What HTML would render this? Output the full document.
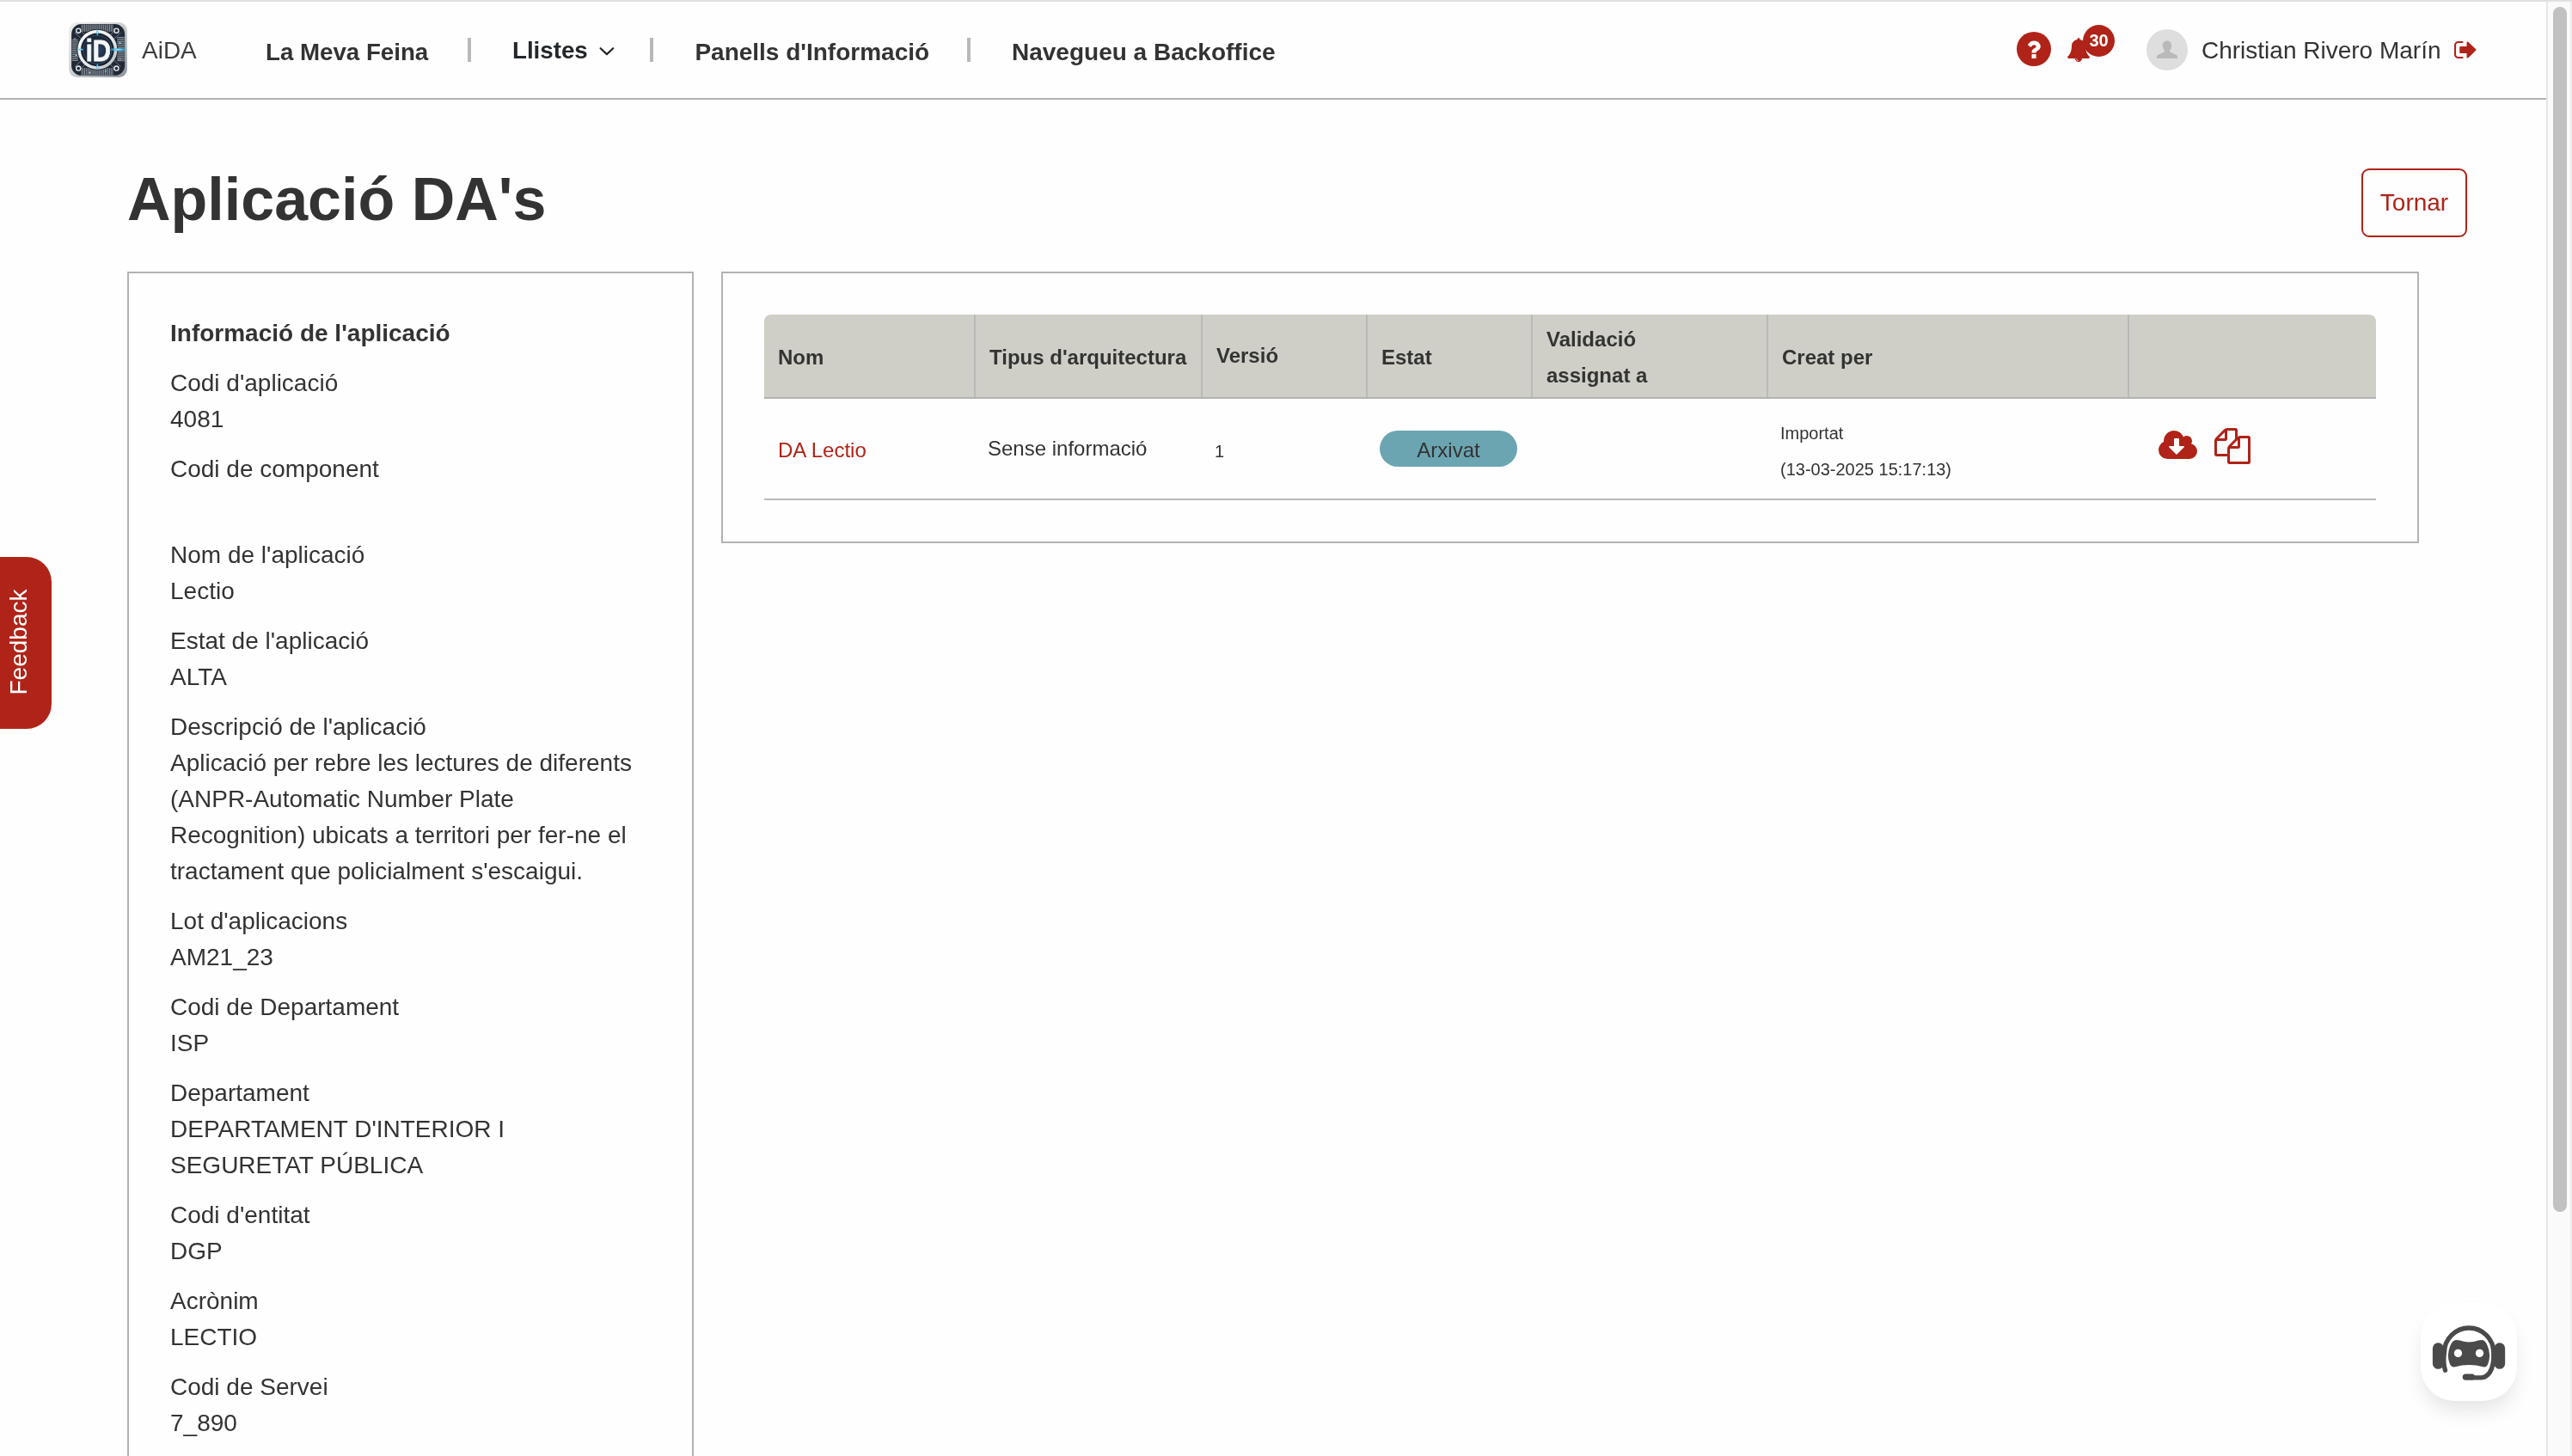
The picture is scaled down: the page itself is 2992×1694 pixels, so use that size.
<!DOCTYPE html>
<html lang="ca">
<head>
<meta charset="utf-8">
<title>AiDA - Aplicació DA's</title>
<style>
*{box-sizing:border-box;margin:0;padding:0}
html,body{width:2992px;height:1694px;overflow:hidden;background:#fefefe}
body{position:relative;font-family:"Liberation Sans",Arial,Helvetica,sans-serif;color:#333;font-size:28px;line-height:42px}
.abs{position:absolute}
a{text-decoration:none;display:block}
button{font-family:inherit;padding:0;margin:0;cursor:pointer;display:block}
.t{position:absolute;white-space:nowrap}
/* top chrome strip */
#strip{left:0;top:0;width:2992px;height:2px;background:#dfe1df}
/* header */
#hdr{left:0;top:2px;width:2962px;height:114px;border-bottom:2px solid #b3b3b3;background:#fefefe}
.nav{font-weight:bold;font-size:28px;line-height:42px;color:#333}
.sep{position:absolute;top:44px;width:4px;height:28px;background:#b9b9b9}
/* scrollbar */
#sbtrack{left:2962px;top:2px;width:30px;height:1692px;background:#fafafa;border-left:2px solid #e6e6e6;border-right:2px solid #ececec}
#sbthumb{left:2970px;top:8px;width:16px;height:1402px;border-radius:8px;background:#c1c1c1}
/* panels */
.panel{position:absolute;border:2px solid #b3b3b3;background:#fefefe}
#left{left:148px;top:316px;width:659px;height:1500px}
#right{left:839px;top:316px;width:1975px;height:316px}
.lbl{position:absolute;left:198px;white-space:nowrap;font-size:28px;line-height:42px;color:#333}
/* table */
#thead{left:889px;top:366px;width:1875px;height:98px;background:#cfcfc7;border-radius:8px 8px 0 0;border-bottom:2px solid #b3b3b3}
.cs{position:absolute;top:366px;width:2px;height:96px;background:#b9b9b9}
.th{position:absolute;font-weight:bold;font-size:24px;line-height:42px;color:#333;white-space:nowrap}
.td{position:absolute;font-size:24px;line-height:42px;color:#333;white-space:nowrap}
#rowline{left:889px;top:580px;width:1875px;height:2px;background:#b9b9b9}
#badge{left:1605px;top:501px;width:160px;height:42px;border-radius:21px;background:#6ba5b2;text-align:center;font-size:24px;line-height:46px;color:#333}
.sm{position:absolute;font-size:20px;line-height:42px;color:#333;white-space:nowrap}
/* button */
#tornar{left:2747px;top:196px;width:123px;height:80px;border:2px solid #b02318;border-radius:9px;color:#b02318;font-size:28px;line-height:76px;text-align:center;background:#fefefe}
/* feedback */
#fb{left:0;top:648px;width:60px;height:200px;background:#b02318;border-radius:0 29px 29px 0}
#fbt{left:-78.500px;top:726px;width:200px;height:42px;line-height:42px;text-align:center;color:#fff;font-size:28px;transform:rotate(-90deg);transform-origin:center center;white-space:nowrap}
/* chatbot */
#bot{left:2816px;top:1516px;width:112px;height:114px;border-radius:40px;background:#fff;box-shadow:0 14px 24px -4px rgba(0,0,0,.11)}
</style>
</head>
<body>
<div id="page" style="position:absolute;left:0;top:0;width:2992px;height:1694px;overflow:hidden;will-change:transform">
<div id="strip" class="abs"></div>
<header id="hdr" class="abs"></header>
<div id="sbtrack" class="abs"></div>
<div id="sbthumb" class="abs"></div>

<!-- HEADER CONTENT -->
<svg class="abs" style="left:80px;top:26px" width="68" height="64" viewBox="262 205 873 825">
<defs>
<linearGradient id="lgm" x1="0" y1="0" x2="1" y2="1"><stop offset="0" stop-color="#f0f0ef"/><stop offset=".45" stop-color="#d2d3d3"/><stop offset="1" stop-color="#8b949b"/></linearGradient>
<linearGradient id="lgr" x1="0" y1="0" x2="1" y2="1"><stop offset="0" stop-color="#ffffff"/><stop offset=".6" stop-color="#e4e6e7"/><stop offset="1" stop-color="#aeb4b9"/></linearGradient>
<radialGradient id="lgc"><stop offset="0" stop-color="#c4f1ff"/><stop offset=".45" stop-color="#43bdf3" stop-opacity=".85"/><stop offset="1" stop-color="#3bb5f0" stop-opacity="0"/></radialGradient>
<radialGradient id="lgi"><stop offset="0" stop-color="#2b4560"/><stop offset="1" stop-color="#16202d"/></radialGradient>
</defs>
<rect x="262" y="205" width="873" height="825" rx="120" fill="url(#lgm)"/>
<rect x="300" y="232" width="800" height="770" rx="150" fill="#1f2937"/>
<g stroke="#d3d6d9" stroke-width="9" opacity=".85">
<path d="M455 236V345M477 236V345M499 236V345M521 236V345M543 236V345M565 236V334M587 236V325M609 236V318M631 236V312M653 236V309M675 236V307M697 236V307M719 236V308M741 236V311M763 236V316M785 236V322M807 236V330M829 236V341M851 236V345M873 236V345M895 236V345M917 236V345"/>
<path d="M455 998V890M477 998V890M499 998V890M521 998V890M543 998V890M565 998V895M587 998V904M609 998V911M631 998V917M653 998V920M675 998V922M697 998V922M719 998V921M741 998V918M763 998V913M785 998V907M807 998V899M829 998V890M851 998V890M873 998V890M895 998V890M917 998V890"/>
<path d="M306 470H400M306 492H400M306 514H399M306 536H392M306 558H387M306 580H384M306 602H382M306 624H382M306 646H383M306 668H386M306 690H391M306 712H398M306 734H400M306 756H400M306 778H400"/>
<path d="M1096 430H985M1096 452H985M1096 474H985M1096 496H985M1096 518H985M1096 540H988M1096 562H993M1096 584H996M1096 606H997M1096 628H997M1096 650H995M1096 672H992M1096 694H987M1096 716H985M1096 738H985M1096 760H985M1096 782H985"/>
<path d="M350 360L470 470M440 330L510 400M1040 360L920 470M950 330L880 400M350 870L470 760M440 905L510 830M1040 870L920 760M950 905L880 830" stroke-width="7"/>
</g>
<g fill="#1f2937" stroke="#eceeef" stroke-width="17"><circle cx="405" cy="330" r="33"/><circle cx="975" cy="330" r="33"/><circle cx="405" cy="895" r="33"/><circle cx="975" cy="895" r="33"/></g>
<g fill="#1f2937" stroke="#d5d8da" stroke-width="7"><circle cx="352" cy="455" r="14"/><circle cx="1022" cy="760" r="16"/></g>
<circle cx="690" cy="615" r="297" fill="url(#lgr)"/>
<circle cx="690" cy="615" r="250" fill="url(#lgi)"/>
<circle cx="690" cy="615" r="214" fill="none" stroke="#5f768c" stroke-width="6"/>
<text x="514" y="788" font-family="Liberation Sans,Arial,sans-serif" font-weight="bold" font-size="460" fill="#f4f5f6" stroke="#f4f5f6" stroke-width="10" textLength="380" lengthAdjust="spacingAndGlyphs">iD</text>
<ellipse cx="690" cy="360" rx="20" ry="56" fill="url(#lgc)"/>
<ellipse cx="690" cy="868" rx="20" ry="56" fill="url(#lgc)"/>
<ellipse cx="440" cy="612" rx="56" ry="20" fill="url(#lgc)"/>
<ellipse cx="1000" cy="614" rx="150" ry="30" fill="url(#lgc)"/>
<circle cx="1028" cy="515" r="15" fill="#6ad3f8"/><circle cx="572" cy="958" r="13" fill="#6ad3f8"/><circle cx="812" cy="935" r="11" fill="#6ad3f8"/><circle cx="372" cy="700" r="10" fill="#bfeeff"/>
</svg>
<div class="t" style="left:165px;top:38px;font-size:28px;color:#3d3d3d">AiDA</div>
<a class="t nav" style="left:309px;top:40px;font-size:27.7px">La Meva Feina</a>
<div class="sep" style="left:544px"></div>
<a class="t nav" style="left:596px;top:38px;color:#24272b;font-size:27.7px">Llistes</a>
<svg class="abs" style="left:696px;top:54px" width="20" height="13" viewBox="0 0 20 13"><path d="M2.600 2.200 L9.900 9.100 L17.200 2.200" fill="none" stroke="#24272b" stroke-width="2.2" stroke-linecap="round" stroke-linejoin="round"/></svg>
<div class="sep" style="left:756px"></div>
<a class="t nav" style="left:808.4px;top:40px">Panells d'Informació</a>
<div class="sep" style="left:1125px"></div>
<a class="t nav" style="left:1177px;top:40px">Navegueu a Backoffice</a>
<svg class="abs" style="left:2346px;top:37px" width="40" height="40" viewBox="128 128 1536 1536"><circle cx="896" cy="896" r="768" fill="#b02318"/><g transform="translate(905 925) scale(0.77) translate(-905 -896)"><path fill="#fff" d="M1024 1376v-192q0-14-9-23t-23-9h-192q-14 0-23 9t-9 23v192q0 14 9 23t23 9h192q14 0 23-9t9-23zm256-672q0-88-55.500-163t-138.500-116-170-41q-243 0-371 213-15 24 8 42l132 100q7 6 19 6 16 0 25-12 53-68 86-92 34-24 86-24 48 0 85.500 26t37.500 59q0 38-20 61t-68 45q-63 28-115.500 86.500t-52.500 125.500v36q0 14 9 23t23 9h192q14 0 23-9t9-23q0-19 21.500-49.500t54.500-49.500q32-18 49-28.500t46-35 44.500-48 28-60.500 12.500-81z"/></g></svg>
<svg class="abs" style="left:2405px;top:44px" width="26" height="28" viewBox="64 0 1664 1792"><path fill="#b02318" d="M912 1696q0-16-16-16-59 0-101.500-42.500t-42.500-101.500q0-16-16-16t-16 16q0 73 51.500 124.500t124.500 51.500q16 0 16-16zm816-288q0 52-38 90t-90 38h-448q0 106-75 181t-181 75-181-75-75-181h-448q-52 0-90-38t-38-90q50-42 91-88t85-119.500 74.500-158.500 50-206 19.500-260q0-152 117-282.500t307-158.500q-8-19-8-39 0-40 28-68t68-28 68 28 28 68q0 20-8 39 190 28 307 158.500t117 282.500q0 139 19.500 260t50 206 74.500 158.500 85 119.500 91 88z"/></svg>
<div class="abs" style="left:2423px;top:29px;width:37px;height:37px;border-radius:50%;background:#b02318;color:#fff;font-weight:bold;font-size:20px;line-height:37px;text-align:center">30</div>
<div class="abs" style="left:2497px;top:34px;width:48px;height:48px;border-radius:50%;background:#dedede;overflow:hidden"><svg width="48" height="48" viewBox="0 0 48 48"><path fill="#b9b9b9" d="M24 13.5c-3.200 0-5.200 2.300-5.200 5.400 0 2.100.7 4 1.900 5.200.3.300.4.800.3 1.300-.2.900-.9 1.500-1.800 1.900l-5.200 2.100c-1.300.5-2.100 1.600-2.100 2.900v1.800h24.200v-1.800c0-1.300-.8-2.400-2.100-2.900l-5.200-2.100c-.9-.4-1.600-1-1.800-1.900-.1-.5 0-1 .3-1.300 1.200-1.200 1.900-3.100 1.900-5.200 0-3.100-2-5.400-5.200-5.400z"/></svg></div>
<div class="t" style="left:2561px;top:38px;font-size:28px;color:#333">Christian Rivero Marín</div>
<svg class="abs" style="left:2855px;top:45px" width="27" height="26" viewBox="64 64 1664 1664" preserveAspectRatio="none"><path fill="#b02318" d="M704 1440q0 4 1 20t.5 26.500-3 23.500-10 19.500-20.500 6.500h-320q-119 0-203.500-84.500t-84.500-203.500v-704q0-119 84.500-203.500t203.500-84.500h320q13 0 22.500 9.500t9.500 22.500q0 4 1 20t.5 26.500-3 23.500-10 19.500-20.500 6.500h-320q-66 0-113 47t-47 113v704q0 66 47 113t113 47h312l11.500 1 11.500 3 8 5.500 7 9 2 13.500zm928-544q0 26-19 45l-544 544q-19 19-45 19t-45-19-19-45v-288h-448q-26 0-45-19t-19-45v-384q0-26 19-45t45-19h448v-288q0-26 19-45t45-19 45 19l544 544q19 19 19 45z"/></svg>

<!-- TITLE -->
<h1 class="t" style="left:148px;top:184px;font-size:70px;line-height:96px;font-weight:bold;color:#333">Aplicació DA's</h1>
<button id="tornar" class="abs" type="button">Tornar</button>

<!-- LEFT PANEL -->
<div id="left" class="panel"></div>
<div class="lbl" style="top:367px;font-weight:bold">Informació de l'aplicació</div>
<div class="lbl" style="top:425px">Codi d'aplicació</div>
<div class="lbl" style="top:467px;width:580px;white-space:nowrap">4081</div>
<div class="lbl" style="top:525px">Codi de component</div>
<div class="lbl" style="top:625px">Nom de l'aplicació</div>
<div class="lbl" style="top:667px;width:580px;white-space:nowrap">Lectio</div>
<div class="lbl" style="top:725px">Estat de l'aplicació</div>
<div class="lbl" style="top:767px;width:580px;white-space:nowrap">ALTA</div>
<div class="lbl" style="top:825px">Descripció de l'aplicació</div>
<div class="lbl" style="top:867px;width:580px;white-space:nowrap">Aplicació per rebre les lectures de diferents<br>(ANPR-Automatic Number Plate<br>Recognition) ubicats a territori per fer-ne el<br>tractament que policialment s'escaigui.</div>
<div class="lbl" style="top:1051px">Lot d'aplicacions</div>
<div class="lbl" style="top:1093px;width:580px;white-space:nowrap">AM21_23</div>
<div class="lbl" style="top:1151px">Codi de Departament</div>
<div class="lbl" style="top:1193px;width:580px;white-space:nowrap">ISP</div>
<div class="lbl" style="top:1251px">Departament</div>
<div class="lbl" style="top:1293px;width:580px;white-space:nowrap">DEPARTAMENT D'INTERIOR I<br>SEGURETAT PÚBLICA</div>
<div class="lbl" style="top:1393px">Codi d'entitat</div>
<div class="lbl" style="top:1435px;width:580px;white-space:nowrap">DGP</div>
<div class="lbl" style="top:1493px">Acrònim</div>
<div class="lbl" style="top:1535px;width:580px;white-space:nowrap">LECTIO</div>
<div class="lbl" style="top:1593px">Codi de Servei</div>
<div class="lbl" style="top:1635px;width:580px;white-space:nowrap">7_890</div>


<!-- RIGHT PANEL -->
<div id="right" class="panel"></div>
<div id="thead" class="abs"></div>
<div class="cs" style="left:1133px"></div>
<div class="cs" style="left:1397px"></div>
<div class="cs" style="left:1589px"></div>
<div class="cs" style="left:1781px"></div>
<div class="cs" style="left:2055px"></div>
<div class="cs" style="left:2475px"></div>
<div class="th" style="left:905px;top:395px">Nom</div>
<div class="th" style="left:1151px;top:395px">Tipus d'arquitectura</div>
<div class="th" style="left:1415px;top:393px">Versió</div>
<div class="th" style="left:1607px;top:395px">Estat</div>
<div class="th" style="left:1799px;top:374px">Validació</div>
<div class="th" style="left:1799px;top:416px">assignat a</div>
<div class="th" style="left:2073px;top:395px">Creat per</div>
<a class="td" style="left:905px;top:503px;color:#b02318">DA Lectio</a>
<div class="td" style="left:1149px;top:501px">Sense informació</div>
<div class="sm" style="left:1413px;top:504px">1</div>
<div id="badge" class="abs">Arxivat</div>
<div class="sm" style="left:2071px;top:483px">Importat</div>
<div class="sm" style="left:2071px;top:525px">(13-03-2025 15:17:13)</div>
<div id="rowline" class="abs"></div>
<svg class="abs" style="left:2511px;top:498px" width="45" height="42" viewBox="0 0 1920 1792"><path fill="#b02318" d="M1280 928q0-14-9-23t-23-9h-224v-352q0-13-9.500-22.500t-22.500-9.500h-192q-13 0-22.500 9.500t-9.500 22.500v352h-224q-13 0-22.500 9.500t-9.500 22.500q0 14 9 23l352 352q9 9 23 9t23-9l351-351q10-12 10-24zm640 224q0 159-112.500 271.500t-271.500 112.500h-1088q-185 0-316.500-131.500t-131.500-316.500q0-130 70-240t188-165q-2-30-2-43 0-212 150-362t362-150q156 0 285.500 87t188.500 231q71-62 166-62 106 0 181 75t75 181q0 76-41 138 130 31 213.500 135.500t83.500 238.500z"/></svg>
<svg class="abs" style="left:2576px;top:498px" width="42" height="42" viewBox="0 0 1792 1792"><path fill="#b02318" d="M1696 384q40 0 68 28t28 68v1216q0 40-28 68t-68 28h-960q-40 0-68-28t-28-68v-288h-544q-40 0-68-28t-28-68v-672q0-40 20-88t48-76l408-408q28-28 76-48t88-20h416q40 0 68 28t28 68v328q68-40 128-40h416zm-544 213l-299 299h299v-299zm-640-384l-299 299h299v-299zm196 647l316-316v-416h-384v416q0 40-28 68t-68 28h-416v640h512v-256q0-40 20-88t48-76zm956 804v-1152h-384v416q0 40-28 68t-68 28h-416v640h896z"/></svg>

<!-- FEEDBACK -->
<div id="fb" class="abs"></div>
<div id="fbt" class="abs">Feedback</div>

<!-- CHATBOT -->
<div id="bot" class="abs"></div>
<svg class="abs" style="left:2800px;top:1500px" width="150" height="150" viewBox="0 0 1456 1456">
<g fill="#4a4a4a">
<rect x="290" y="605" width="125" height="296" rx="62"/>
<rect x="985" y="605" width="123" height="296" rx="62"/>
<rect x="628" y="955" width="140" height="70" rx="35"/>
<path d="M555 572Q515 572 488 640Q443 745 486 850Q508 886 545 876Q700 832 860 876Q897 886 913 850Q955 745 910 640Q885 572 845 572Q805 572 765 590Q700 606 640 590Q600 572 555 572Z"/>
</g>
<path d="M432 915C414 860 410 790 422 715A278 278 0 0 1 978 715C982 800 975 880 935 940C905 985 880 998 840 998L665 998" fill="none" stroke="#4a4a4a" stroke-width="52" stroke-linecap="round"/>
<circle cx="577" cy="722" r="45" fill="#fff"/><circle cx="820" cy="722" r="45" fill="#fff"/>
</svg>
</div>
<script>(function(){var w=window.innerWidth;if(w&&Math.abs(w-2992)>2){var s=w/2992,p=document.getElementById('page'),d=document.documentElement,b=document.body;p.style.transformOrigin='0 0';p.style.transform='scale('+s+')';d.style.width=b.style.width=w+'px';d.style.height=b.style.height=Math.round(1694*s)+'px';}})();</script>
</body>
</html>
